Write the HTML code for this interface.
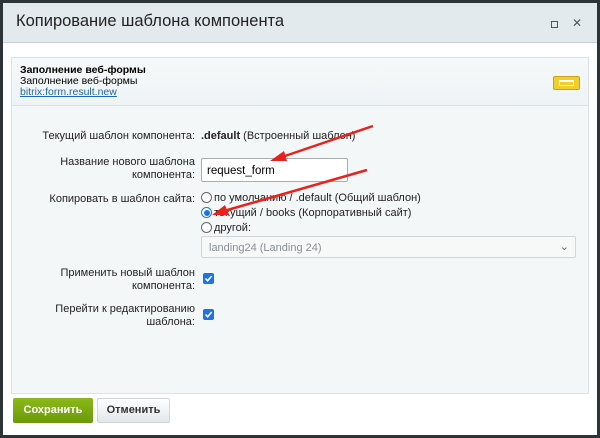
<!DOCTYPE html>
<html><head><meta charset="utf-8"><style>
*{box-sizing:border-box}
body{margin:0;width:600px;height:438px;background:#2d3437;font-family:"Liberation Sans",sans-serif;font-size:11px;color:#000;position:relative;overflow:hidden}
.dlg{position:absolute;left:3px;top:3px;width:594px;height:432px;background:#fff}
.hd{position:absolute;left:0;top:0;width:594px;height:40px;background:#e3eaed;border-bottom:1px solid #c7cfd3}
.hd .t{position:absolute;left:13px;top:9px;font-size:16.5px;color:#222}
.panel{position:absolute;left:8px;top:54px;width:578px;height:337px;background:#f4f7f8;border:1px solid #d9e3e8}
.top{position:absolute;left:0;top:0;width:576px;height:48px;background:linear-gradient(#f6f9fa,#eef3f5);border-bottom:1px solid #d9e3e8}
.ab{position:absolute;font-size:11px}
.lbl{position:absolute;right:403px;text-align:right;color:#222;line-height:13px;font-size:11px}
.v{position:absolute;left:198px;font-size:11px;color:#222}
.inp{position:absolute;left:198px;top:101px;width:147px;height:24px;border:1px solid #a8adb0;border-radius:2px;background:#fff;padding:6px 5px;font-size:11.5px}
.rad{display:inline-block;width:11px;height:11px;border:1px solid #666;border-radius:50%;background:#fff;vertical-align:-2px;margin-right:2px;position:relative}
.rad.on{border-color:#1a73e8}
.rad.on::after{content:"";position:absolute;left:1.5px;top:1.5px;width:6px;height:6px;border-radius:50%;background:#1a73e8}
.sel{position:absolute;left:198px;top:179px;width:375px;height:22px;border:1px solid #d3d6d8;border-radius:2px;background:#f7f8f8;color:#8a8f92;padding:5px 7px;font-size:11px}
.cb{position:absolute;left:200px;width:11px;height:11px;background:#1a73e8;border-radius:2px}
.btn{position:absolute;top:395px;height:25px;border-radius:2px;font-size:11px;font-weight:bold;text-align:center;line-height:25px}
</style></head><body>
<div class="dlg">
<div class="hd"><div class="t">Копирование шаблона компонента</div>
<div style="position:absolute;left:548px;top:18px;width:7px;height:7px;border:1px solid #555"></div>
<div style="position:absolute;left:569px;top:13px;font-size:12px;color:#555">✕</div></div>
<div class="panel">
<div class="top">
<div class="ab" style="left:8px;top:6px;font-weight:bold;font-size:10.5px">Заполнение веб-формы</div>
<div class="ab" style="left:8px;top:17px;font-size:10.5px">Заполнение веб-формы</div>
<div class="ab" style="left:8px;top:28px;font-size:10.5px;color:#2067b0;text-decoration:underline">bitrix:form.result.new</div>
<div style="position:absolute;left:541px;top:18px;width:27px;height:14px;background:#f3cd2e;border:1px solid #c9a414;border-radius:2px"><div style="margin:3px 5px;height:6px;border:1px solid #fff;border-top-width:2px"></div></div>
</div>
</div>
<div class="lbl" style="top:127px;right:402px">Текущий шаблон компонента:</div>
<div class="v" style="top:127px"><b>.default</b> (Встроенный шаблон)</div>
<div class="lbl" style="top:153px;right:402px">Название нового шаблона<br>компонента:</div>
<div class="inp" style="top:155px">request_form</div>
<div class="lbl" style="top:190px;right:402px">Копировать в шаблон сайта:</div>
<div class="v" style="top:189px"><span class="rad"></span>по умолчанию / .default (Общий шаблон)</div>
<div class="v" style="top:204px"><span class="rad on"></span>текущий / books (Корпоративный сайт)</div>
<div class="v" style="top:219px"><span class="rad"></span>другой:</div>
<div class="sel" style="top:233px">landing24 (Landing 24)<span style="position:absolute;right:6px;top:3px;color:#666">⌄</span></div>
<div class="lbl" style="top:264px;right:402px">Применить новый шаблон<br>компонента:</div>
<div class="cb" style="top:270px"><svg width="11" height="11" style="position:absolute;left:0;top:0"><path d="M2.5 5.5 L4.6 7.8 L8.7 3" stroke="#fff" stroke-width="1.6" fill="none"/></svg></div>
<div class="lbl" style="top:300px;right:402px">Перейти к редактированию<br>шаблона:</div>
<div class="cb" style="top:306px"><svg width="11" height="11" style="position:absolute;left:0;top:0"><path d="M2.5 5.5 L4.6 7.8 L8.7 3" stroke="#fff" stroke-width="1.6" fill="none"/></svg></div>
<div class="btn" style="left:10px;width:80px;background:linear-gradient(#8bb81a,#6a9a06);color:#fff">Сохранить</div>
<div class="btn" style="left:94px;width:73px;background:linear-gradient(#fff,#e2e7ea);border:1px solid #d0d6d9;color:#333;line-height:23px">Отменить</div>
</div>
<svg width="600" height="438" style="position:absolute;left:0;top:0">
<g stroke="#e8221c" stroke-width="2.5" fill="#e8221c">
<line x1="373" y1="126" x2="282" y2="157"/><polygon points="270,161 284,151 287,161" stroke="none"/>
<line x1="367" y1="170" x2="224" y2="211"/><polygon points="212,215 225,205 229,215" stroke="none"/>
</g></svg>
</body></html>
